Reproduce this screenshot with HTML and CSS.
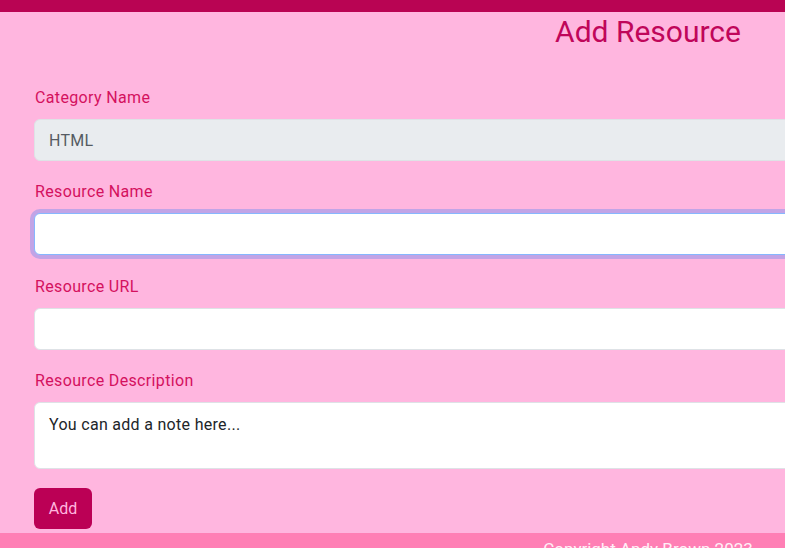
FILE: index.html
```html
<!DOCTYPE html>
<html lang="en">
<head>
<meta charset="utf-8">
<title>Add Resource</title>
<link rel="stylesheet" href="styles.css">
</head>
<body>
<div class="page">
  <div class="topbar"></div>
  <main class="content">
    <h1 class="title">Add Resource</h1>
    <form class="form">
      <div class="group">
        <label class="label">Category Name</label>
        <input class="control control-disabled" type="text" value="HTML" readonly>
      </div>
      <div class="group">
        <label class="label">Resource Name</label>
        <input class="control control-focus" type="text">
      </div>
      <div class="group">
        <label class="label">Resource URL</label>
        <input class="control" type="text">
      </div>
      <div class="group group-last">
        <label class="label">Resource Description</label>
        <textarea class="control control-area">You can add a note here...</textarea>
      </div>
      <button class="btn" type="button">Add</button>
    </form>
  </main>
  <footer class="footer">Copyright Andy Brown 2023</footer>
</div>
</body>
</html>
```

FILE: styles.css
```css
html, body {
  margin: 0;
  padding: 0;
  overflow: hidden;
  background: #ffb6df;
}
body {
  font-family: Roboto, "Liberation Sans", sans-serif;
  color: #212529;
}
.page {
  width: 1296px;
  display: flex;
  flex-direction: column;
}
.topbar {
  height: 12px;
  background: #b90453;
}
.content {
  padding: 0 34px;
}
.title {
  margin: 0 0 35px;
  text-align: center;
  font-size: 30px;
  font-weight: 400;
  line-height: 39px;
  color: #c0065a;
}
.form {
  display: flex;
  flex-direction: column;
}
.group {
  display: flex;
  flex-direction: column;
  margin-bottom: 19.33px;
}
.group-last {
  margin-bottom: 19px;
}
.label {
  display: block;
  font-size: 16px;
  line-height: 24px;
  letter-spacing: 0.35px;
  color: #d4115e;
  margin: 0 0 9px 1px;
}
.control {
  box-sizing: border-box;
  height: 42px;
  width: 100%;
  padding: 0 14px;
  border: 1px solid #dee2e6;
  border-radius: 6px;
  background: #fff;
  font-family: inherit;
  font-size: 16px;
  letter-spacing: 0.3px;
  color: #212529;
  outline: none;
}
.control-disabled {
  background: #e9ecef;
  color: #555b62;
}
.control-focus {
  border-color: #86b7fe;
  box-shadow: 0 0 0 4px rgba(13, 110, 253, 0.25);
}
.control-area {
  height: 67px;
  padding: 10px 14px;
  resize: none;
  line-height: 24px;
}
.btn {
  align-self: flex-start;
  width: 58px;
  height: 41px;
  margin-bottom: 4px;
  border: none;
  border-radius: 6px;
  background: #bb0055;
  color: #ffb6df;
  font-family: inherit;
  font-size: 16px;
  padding: 0;
}
.footer {
  background: #ff7fb5;
  color: #fff0f7;
  text-align: center;
  font-size: 17px;
  line-height: 24px;
  padding-top: 4px;
  height: 40px;
}
```
